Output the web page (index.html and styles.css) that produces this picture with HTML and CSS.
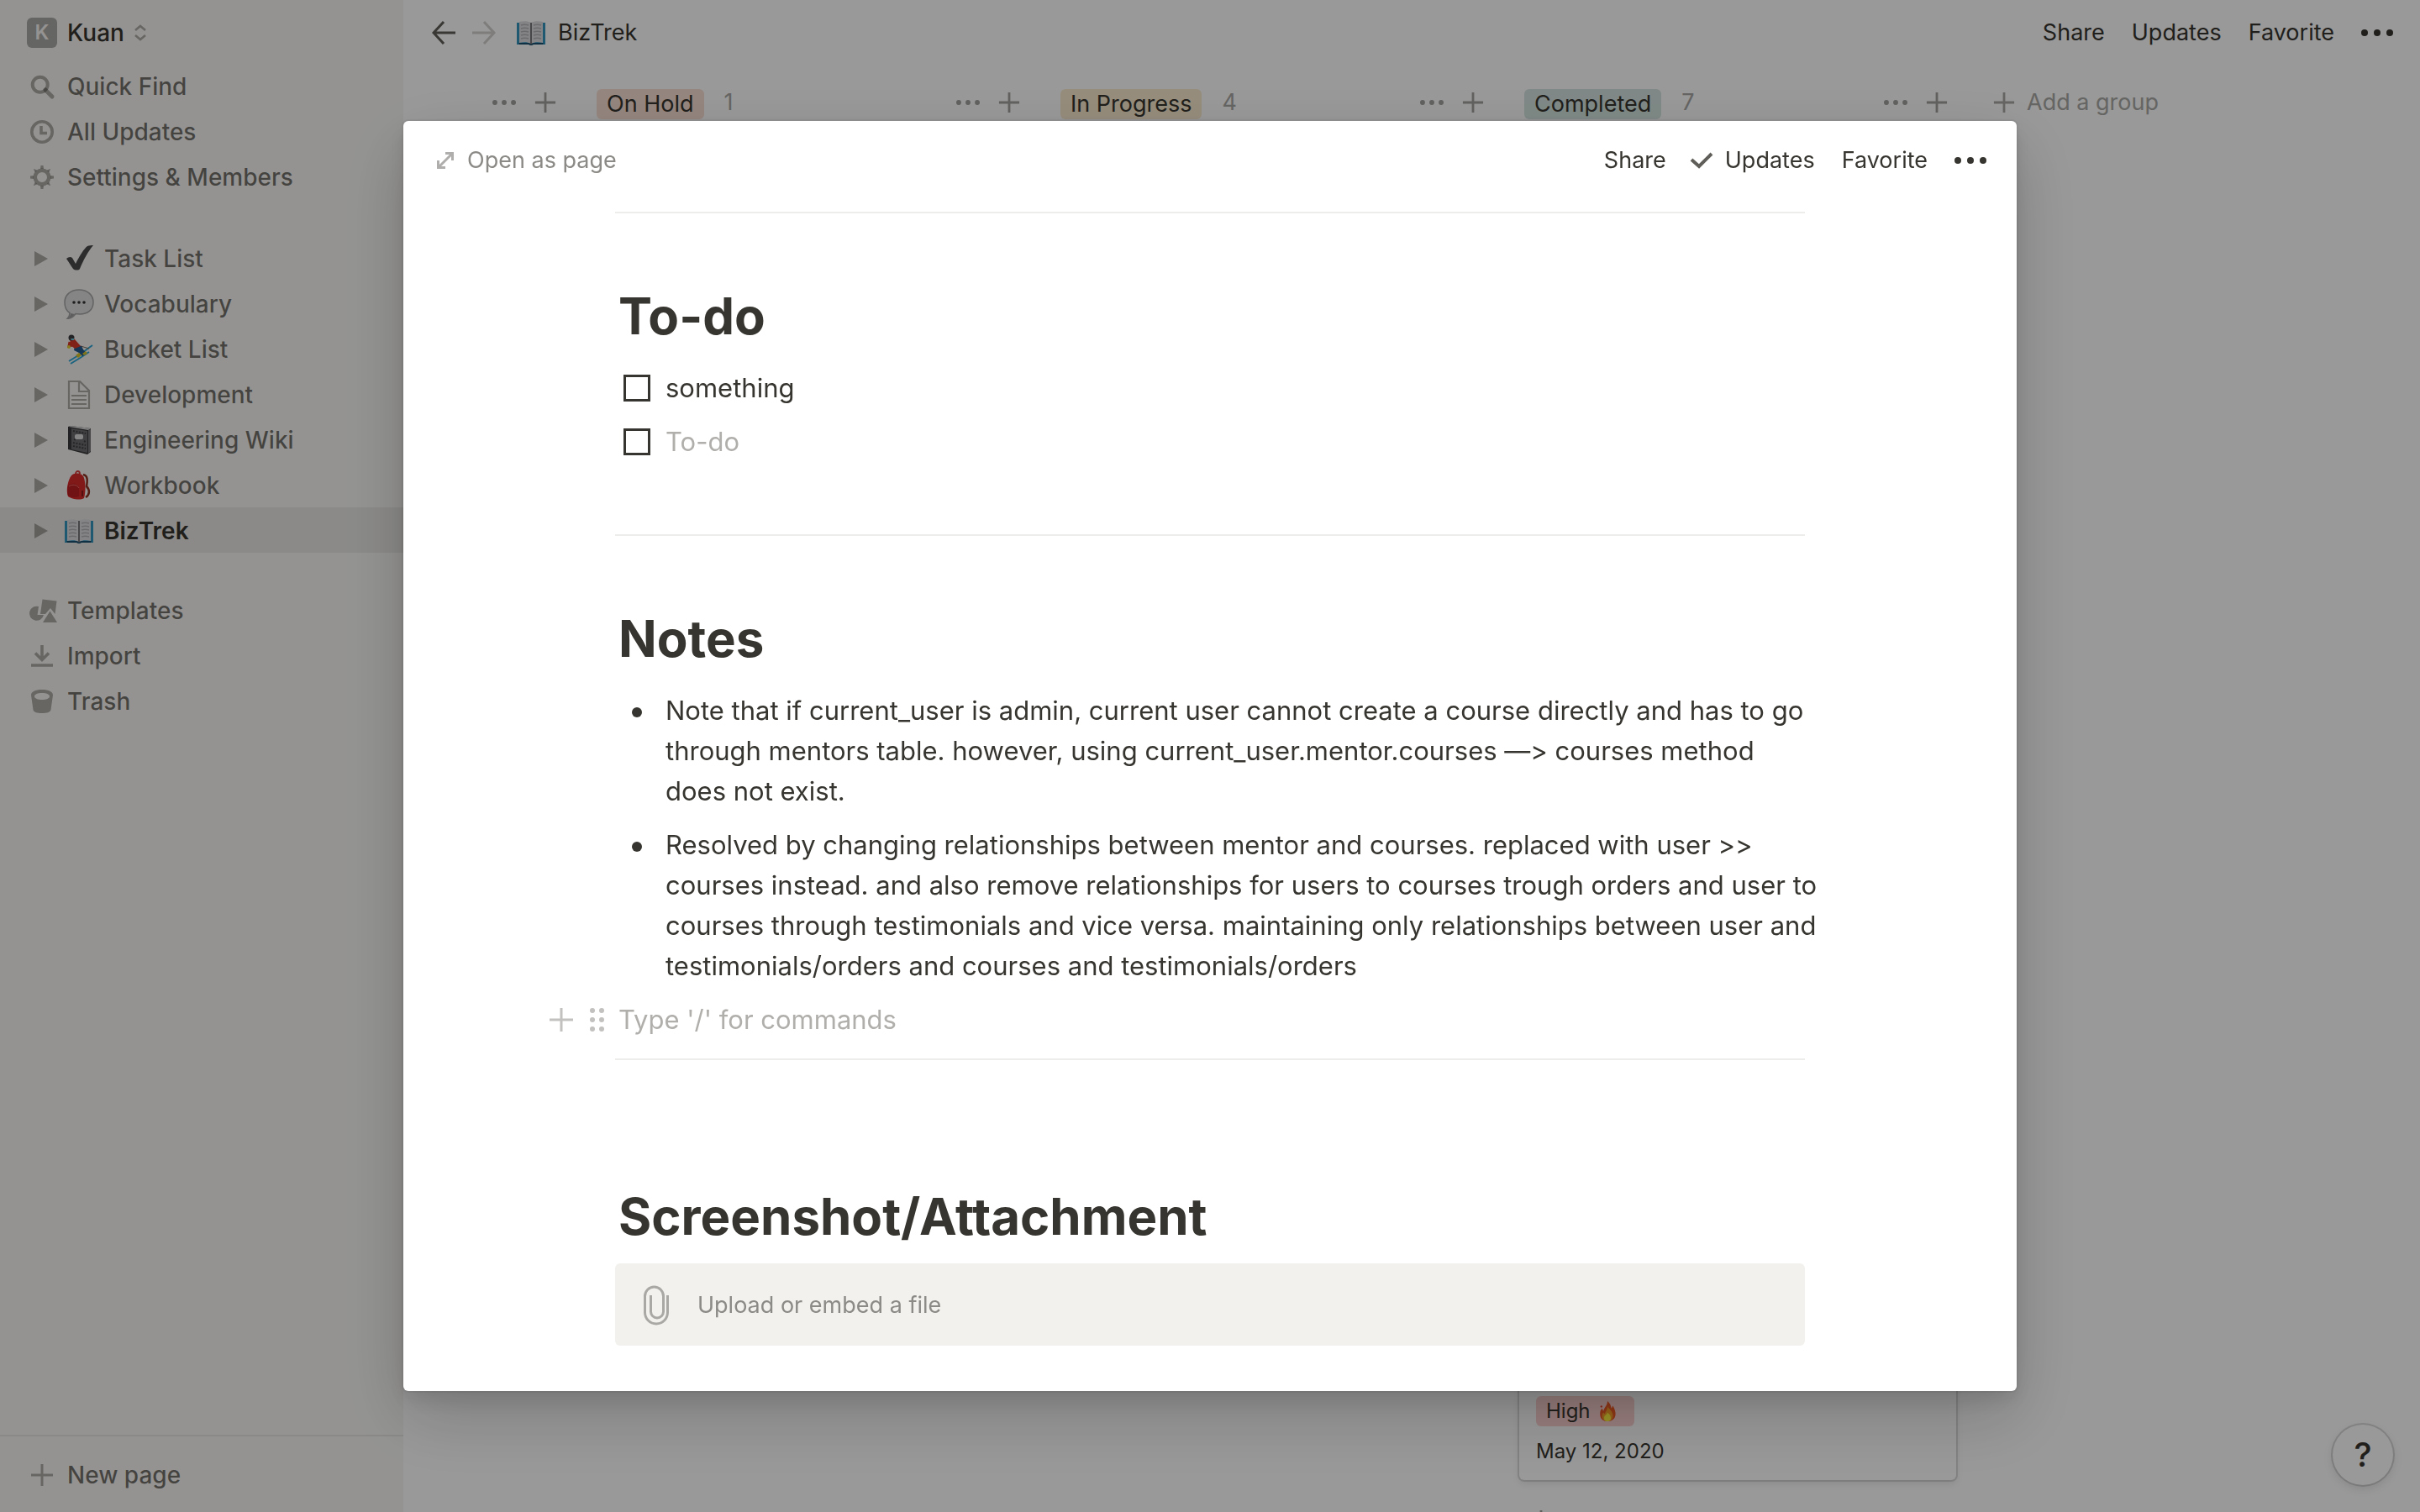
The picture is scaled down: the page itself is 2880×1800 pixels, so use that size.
FILE: index.html
```html
<!DOCTYPE html>
<html lang="en">
<head>
<meta charset="utf-8">
<meta name="viewport" content="width=device-width, initial-scale=1">
<title>BizTrek</title>
<link rel="stylesheet" href="styles.css">
</head>
<body>
<svg class="sprite" aria-hidden="true">
  <symbol id="plus" viewBox="0 0 28 28"><path d="M14 1v26M1 14h26" fill="none" stroke="currentColor" stroke-width="3"/></symbol>
  <symbol id="dots" viewBox="0 0 38 8"><circle cx="4" cy="4" r="4"/><circle cx="19" cy="4" r="4"/><circle cx="34" cy="4" r="4"/></symbol>
  <symbol id="triangle" viewBox="0 0 18 18"><path d="M1 0v18l16-9z"/></symbol>
  <symbol id="book" viewBox="0 0 36 36">
    <path d="M1 6h34v26H1z" fill="#3593bd"/>
    <path d="M3 30h30l-1 2H21l-2 1h-2l-2-1H4z" fill="#1c5270"/>
    <path d="M4 5c5-1 10-1 14 1 4-2 9-2 14-1v25c-5-1-10-1-14 1-4-2-9-2-14-1z" fill="#dcdbde"/>
    <path d="M17 6h2v25l-1 1-1-1z" fill="#77757a"/>
    <path d="M6 9c3-1 6-1 9 0M6 13c3-1 6-1 9 0M6 17c3-1 6-1 9 0M6 21c3-1 6-1 9 0M6 25c3-1 6-1 9 0M21 9c3-1 6-1 9 0M21 13c3-1 6-1 9 0M21 17c3-1 6-1 9 0M21 21c3-1 6-1 9 0M21 25c3-1 6-1 9 0" fill="none" stroke="#b3b1b6" stroke-width="1.4"/>
  </symbol>
</svg>

<div class="app">
  <nav class="sidebar" aria-label="Workspace">
    <button class="row switcher" type="button">
      <span class="avatar">K</span>Kuan
      <svg class="chevrons" viewBox="0 0 14 20"><path d="M1 7l6-5 6 5M1 13l6 5 6-5" fill="none" stroke="currentColor" stroke-width="2.6"/></svg>
    </button>
    <div class="group">
      <button class="row" type="button">
        <svg class="icon" viewBox="0 0 36 36"><circle cx="15.700" cy="15.700" r="9" fill="none" stroke="currentColor" stroke-width="4"/><path d="M22 22l8 8" stroke="currentColor" stroke-width="5" stroke-linecap="round"/></svg>
        Quick Find
      </button>
      <button class="row" type="button">
        <svg class="icon" viewBox="0 0 36 36"><circle cx="18" cy="18" r="12.200" fill="none" stroke="currentColor" stroke-width="3.600"/><path d="M17 11v8.500h7" fill="none" stroke="currentColor" stroke-width="3.600"/></svg>
        All Updates
      </button>
      <button class="row" type="button">
        <svg class="icon" viewBox="0 0 36 36" fill="currentColor"><path fill-rule="evenodd" d="M18 7.500a10.500 10.500 0 1 1 0 21a10.500 10.500 0 1 1 0-21zm0 4.500a6 6 0 1 0 0 12a6 6 0 1 0 0-12z"/><path d="M16 8l.5-4h3l.5 4zM16 28l.5 4h3l.5-4zM8 16l-4 .5v3l4 .5zM28 16l4 .5v3l-4 .5zM9.700 12.300L8 8.500 8.500 8l3.800 1.700zM26.300 12.300L28 8.500 27.500 8l-3.800 1.700zM9.700 23.700L8 27.500l.5.500 3.800-1.700zM26.300 23.700l1.700 3.800-.5.500-3.800-1.700z"/></svg>
        Settings &amp; Members
      </button>
    </div>
    <div class="group tree">
      <a class="row" href="#task-list"><svg class="toggle"><use href="#triangle"/></svg>
        <svg class="icon" viewBox="0 0 36 36"><path d="M3 18c2-2 5-3 7-1l4 7C19 14 24 6 28 3c2-1 5-1 7-1C29 9 23 20 19 30c-1 2-6 2-8 0C8 26 6 22 3 18z" fill="#4a4a4b"/></svg>
        Task List</a>
      <a class="row" href="#vocabulary"><svg class="toggle"><use href="#triangle"/></svg>
        <svg class="icon" viewBox="0 0 36 36"><path d="M18 1c10 0 17 6 17 15s-7 14-16 14l-5-.5C11 34 8 35 4 35.500c2-2 3-4 3-7C3 26 1 21 1 16 1 7 8 1 18 1z" fill="#dededf" stroke="#a5a5a6" stroke-width="1.500"/><path d="M5 35c2-2 3-4 3-6l5 1c-2 2-4 4-8 5z" fill="#9b9b9d"/><circle cx="12" cy="16" r="1.800" fill="#333"/><circle cx="18" cy="16" r="1.800" fill="#333"/><circle cx="24" cy="16" r="1.800" fill="#333"/></svg>
        Vocabulary</a>
      <a class="row" href="#bucket-list"><svg class="toggle"><use href="#triangle"/></svg>
        <svg class="icon" viewBox="0 0 36 36"><path d="M6 32l13-8 15-11M8 35l13-8 9-6" fill="none" stroke="#2fa6d4" stroke-width="2"/><path d="M20 14l10 3" stroke="#7d6a56" stroke-width="1"/><path d="M13 13l8 1 2 4 4 5-5 3-4-4-6-3z" fill="#265a8e"/><path d="M14 25l4-3 3 3-4 3zM22 23l4-3 2 3-4 2z" fill="#d9c22b"/><path d="M7 5l6 1 7 8-7 3-5-4z" fill="#d8392a"/><path d="M7 9l-1 5 4-1" fill="none" stroke="#d8392a" stroke-width="3"/><circle cx="6" cy="15" r="2" fill="#e3cf35"/><circle cx="9" cy="4" r="3.500" fill="#3b3b40"/><path d="M8 5h4v2H9z" fill="#6ec1d8"/></svg>
        Bucket List</a>
      <a class="row" href="#development"><svg class="toggle"><use href="#triangle"/></svg>
        <svg class="icon" viewBox="0 0 36 36"><path d="M6 2h13l11 11v21H6zM18 2v12h12M9 19h18M9 24h18M9 29h18" fill="none" stroke="currentColor" stroke-width="2.200"/></svg>
        Development</a>
      <a class="row" href="#engineering-wiki"><svg class="toggle"><use href="#triangle"/></svg>
        <svg class="icon" viewBox="0 0 36 36"><path d="M5 2l3-1 24 3v28l-4 3L5 29z" fill="#3a3a3c"/><path d="M8 1l24 3-3 2L6 2z" fill="#d4d4d6"/><path d="M29 6l3-1v26l-3 3z" fill="#77777a"/><path d="M9 4l19 3v26L9 29z" fill="#6b6b6e"/><path d="M11 7l15 3M11 21l15 3M11 25l15 3M12 17l3 1M24 19l2 1" stroke="#3f3f42" stroke-width="2" stroke-dasharray="2 1.500"/><rect x="13" y="11" width="10" height="6" rx="2" fill="#dcdcdd"/></svg>
        Engineering Wiki</a>
      <a class="row" href="#workbook"><svg class="toggle"><use href="#triangle"/></svg>
        <svg class="icon" viewBox="0 0 36 36"><path d="M23 5c6 1 5 8 4 14 4 4 4 10-1 13" fill="none" stroke="#8d3323" stroke-width="2.500"/><path d="M14 4c0-4 5-4 5 0" fill="none" stroke="#d83a3a" stroke-width="1.800"/><path d="M9 6c5-4 13-3 15 3 2 7 2 17 0 24-5 3-15 1-19-2C2 24 5 11 9 6z" fill="#d92a2a"/><path d="M5 18c5-4 12-2 13 3v10c-5 2-10 1-13-1-1-4-1-8 0-12z" fill="#bd1e22"/><path d="M6 19c4-3 10-2 12 2" fill="none" stroke="#ef6a66" stroke-width="1"/><path d="M22 24v7" stroke="#6c1518" stroke-width="1.500"/></svg>
        Workbook</a>
      <a class="row current" href="#biztrek" aria-current="page"><svg class="toggle"><use href="#triangle"/></svg>
        <svg class="icon"><use href="#book"/></svg>
        BizTrek</a>
    </div>
    <div class="group">
      <button class="row" type="button">
        <svg class="icon" viewBox="0 0 36 36" fill="currentColor"><path d="M14 13l-1.500 10H20a8.600 8.600 0 1 1-6-10z"/><path d="M18.500 4.500l17 2-2 15.500-5.500-7-6 7h-6z"/><path d="M27.500 18.500l8.500 13.500H19z"/></svg>
        Templates
      </button>
      <button class="row" type="button">
        <svg class="icon" viewBox="0 0 36 36"><path d="M18 5v16M10 14.500l8 8 8-8M5 29h26" fill="none" stroke="currentColor" stroke-width="3.600"/></svg>
        Import
      </button>
      <button class="row" type="button">
        <svg class="icon" viewBox="0 0 36 36"><path fill="currentColor" fill-rule="evenodd" d="M18 4c8 0 13 2.500 13 6.500L28.500 28c-.5 3-5 4-10.500 4S8 31 7.500 28L5 10.500C5 6.500 10 4 18 4zm0 4c-5 0-9 1.500-9 4s4 4 9 4 9-1.500 9-4-4-4-9-4z"/></svg>
        Trash
      </button>
    </div>
    <button class="row new-page" type="button">
      <svg class="icon" viewBox="-4 -4 36 36"><use href="#plus" width="28" height="28"/></svg>New page
    </button>
  </nav>

  <main class="main">
    <header class="topbar">
      <button class="nav-arrow" type="button" aria-label="Back"><svg viewBox="0 0 28 28"><path d="M14 1L2 14l12 13M2 14h26" fill="none" stroke="currentColor" stroke-width="3"/></svg></button>
      <button class="nav-arrow faded" type="button" aria-label="Forward"><svg viewBox="0 0 28 28"><path d="M14 1l12 13-12 13M26 14H0" fill="none" stroke="currentColor" stroke-width="3"/></svg></button>
      <a class="crumb" href="#biztrek"><svg class="icon"><use href="#book"/></svg>BizTrek</a>
      <div class="actions">
        <button type="button">Share</button>
        <button type="button">Updates</button>
        <button type="button">Favorite</button>
        <button type="button" aria-label="More"><svg class="more"><use href="#dots"/></svg></button>
      </div>
    </header>
    <div class="board">
      <section class="column cut">
        <div class="column-head">
          <div class="tools"><button type="button" aria-label="Group options"><svg class="more"><use href="#dots"/></svg></button><button type="button" aria-label="Add card"><svg class="add"><use href="#plus"/></svg></button></div>
        </div>
      </section>
      <section class="column">
        <div class="column-head">
          <span class="tag hold">On Hold</span><span class="count">1</span>
          <div class="tools"><button type="button" aria-label="Group options"><svg class="more"><use href="#dots"/></svg></button><button type="button" aria-label="Add card"><svg class="add"><use href="#plus"/></svg></button></div>
        </div>
      </section>
      <section class="column">
        <div class="column-head">
          <span class="tag progress">In Progress</span><span class="count">4</span>
          <div class="tools"><button type="button" aria-label="Group options"><svg class="more"><use href="#dots"/></svg></button><button type="button" aria-label="Add card"><svg class="add"><use href="#plus"/></svg></button></div>
        </div>
      </section>
      <section class="column">
        <div class="column-head">
          <span class="tag done">Completed</span><span class="count">7</span>
          <div class="tools"><button type="button" aria-label="Group options"><svg class="more"><use href="#dots"/></svg></button><button type="button" aria-label="Add card"><svg class="add"><use href="#plus"/></svg></button></div>
        </div>
        <article class="card">
          <span class="priority">High
            <svg viewBox="0 0 24 30"><path d="M12 0c5 4 5 8 6 11l2-4c3 5 4 9 4 12 0 7-5 11-12 11S1 26 1 19c0-4 1-6 3-8l2 4c1-6 6-8 6-15z" fill="#ee5a24"/><path d="M12 8c3 4 8 7 8 14 0 5-3 8-8 8s-8-3-8-8c0-2 1-4 2-5l2 2c1-4 4-6 4-11z" fill="#f7a02c"/><path d="M12 17c2 2 5 4 5 8s-2 5-5 5-5-1-5-5 4-4 5-8z" fill="#ffef3e"/><circle cx="3" cy="8" r="1.500" fill="#e8452c"/></svg>
          </span>
          <time datetime="2020-05-12">May 12, 2020</time>
        </article>
        <button class="new-card" type="button" aria-label="New"><svg class="add"><use href="#plus"/></svg></button>
      </section>
      <button class="add-group" type="button"><svg class="add"><use href="#plus"/></svg>Add a group</button>
    </div>
    <button class="help" type="button" aria-label="Help">?</button>
  </main>
</div>

<div class="overlay">
  <div class="modal" role="dialog" aria-modal="true" aria-label="Card">
    <header class="modal-head">
      <button class="open" type="button"><svg viewBox="0 0 20 20"><path d="M10 1.500h8.500V10M1.500 10v8.500H10M18 2L2 18" fill="none" stroke="currentColor" stroke-width="3"/></svg>Open as page</button>
      <div class="actions">
        <button type="button">Share</button>
        <button class="following" type="button"><svg viewBox="0 0 28 20"><path d="M2 9l9 8L26 2" fill="none" stroke="currentColor" stroke-width="4"/></svg>Updates</button>
        <button type="button">Favorite</button>
        <button type="button" aria-label="More"><svg class="more"><use href="#dots"/></svg></button>
      </div>
    </header>
    <div class="doc">
      <hr>
      <h1>To-do</h1>
      <div class="todo"><input type="checkbox" id="todo-1"><label for="todo-1">something</label></div>
      <div class="todo"><input type="checkbox" aria-label="Done"><input class="text" type="text" placeholder="To-do" aria-label="To-do"></div>
      <hr class="after-todo">
      <h1>Notes</h1>
      <ul>
        <li>Note that if current_user is admin, current user cannot create a course directly and has to go<br>through mentors table. however, using current_user.mentor.courses —&gt; courses method<br>does not exist.</li>
        <li>Resolved by changing relationships between mentor and courses. replaced with user &gt;&gt;<br>courses instead. and also remove relationships for users to courses trough orders and user to<br>courses through testimonials and vice versa. maintaining only relationships between user and<br>testimonials/orders and courses and testimonials/orders</li>
      </ul>
      <div class="line">
        <button type="button" aria-label="Add block"><svg class="plus" viewBox="0 0 28 28"><path d="M14 0v28M0 14h28" stroke="currentColor" stroke-width="3"/></svg></button>
        <button type="button" aria-label="Drag block"><svg class="grip" viewBox="0 0 18 28" fill="currentColor"><circle cx="3" cy="3" r="3"/><circle cx="14" cy="3" r="3"/><circle cx="3" cy="14" r="3"/><circle cx="14" cy="14" r="3"/><circle cx="3" cy="25" r="3"/><circle cx="14" cy="25" r="3"/></svg></button>
        <input class="text" type="text" placeholder="Type '/' for commands" aria-label="New block">
      </div>
      <hr class="after-line">
      <h1 class="late">Screenshot/Attachment</h1>
      <button class="upload" type="button">
        <svg viewBox="0 0 30 48"><path d="M28.500 12v20.500a13.500 13.500 0 0 1-27 0V13a11 11 0 0 1 22 0v18.500a7.500 7.500 0 0 1-15 0V12" fill="none" stroke="currentColor" stroke-width="3"/></svg>
        Upload or embed a file
      </button>
    </div>
  </div>
</div>
</body>
</html>
```

FILE: styles.css
```css
* { box-sizing: border-box; }

:root {
  --ink: #37352f;
  --muted: rgba(25, 23, 17, 0.6);
  --icon: rgba(25, 23, 17, 0.34);
  --rule: #ededec;
}

body {
  margin: 0;
  height: 100vh;
  overflow: hidden;
  color: var(--ink);
  background: #fff;
  font: 27px/36px Inter, "Liberation Sans", sans-serif;
  font-feature-settings: "calt" 0;
}

button, input {
  margin: 0;
  padding: 0;
  border: 0;
  background: none;
  color: inherit;
  font: inherit;
  font-feature-settings: inherit;
}

a { color: inherit; text-decoration: none; }
svg { display: block; flex: none; }
.sprite { display: none; }

.app { display: flex; height: 100vh; }

/* Sidebar */
.sidebar {
  flex: none;
  width: 480px;
  display: flex;
  flex-direction: column;
  background: #f7f6f3;
  font-size: 28px;
  font-weight: 500;
}

.row {
  display: flex;
  align-items: center;
  gap: 12px;
  width: 100%;
  height: 54px;
  padding: 2px 32px 0;
  color: var(--muted);
  text-align: left;
}

.row .icon { width: 36px; height: 36px; color: var(--icon); }
.switcher { height: 75px; color: var(--ink); }

.avatar {
  width: 36px;
  height: 36px;
  border-radius: 6px;
  background: #a9a8a5;
  color: #f7f6f3;
  font-size: 24px;
  font-weight: 600;
  text-align: center;
}

.chevrons { width: 14px; height: 20px; color: var(--icon); }
.group { margin-bottom: 43px; }
.tree { margin-bottom: 41px; }
.tree .row { padding-left: 40px; }
.toggle { width: 18px; height: 18px; margin-right: 6px; fill: var(--icon); }
.tree .current { background: #e8e7e4; color: var(--ink); font-weight: 600; }

.new-page {
  height: 92px;
  margin-top: auto;
  border-top: 2px solid #e6e5e2;
}

/* Page behind the dialog */
.main {
  flex: 1;
  min-width: 0;
  display: flex;
  flex-direction: column;
}

.topbar {
  flex: none;
  display: flex;
  align-items: center;
  height: 76px;
  padding: 2px 32px 0 34px;
}

.nav-arrow { margin-right: 20px; color: #605e58; }
.nav-arrow svg { width: 28px; height: 28px; }
.nav-arrow.faded { color: #d2d1cf; }
.crumb { display: flex; align-items: center; gap: 14px; margin-left: 4px; }
.crumb .icon { width: 36px; height: 36px; }

.actions { display: flex; align-items: center; gap: 32px; margin-left: auto; }
.more { width: 38px; height: 8px; fill: currentColor; }

.board {
  flex: 1;
  min-height: 0;
  display: flex;
  align-items: stretch;
  gap: 32px;
  overflow: hidden;
}

.column {
  flex: none;
  width: 520px;
  display: flex;
  flex-direction: column;
}

.column.cut { width: 192px; }

.column-head {
  display: flex;
  align-items: center;
  height: 92px;
  padding: 0 10px 0 6px;
}

.tag { height: 36px; margin-top: 4px; padding: 0 12px; border-radius: 6px; }
.hold { background: #fadfd5; }
.progress { background: #faebd0; }
.done { background: #d5e5e1; }
.count { margin-left: 24px; color: #a9a8a5; }
.tools { display: flex; align-items: center; gap: 22px; margin-left: auto; color: #a3a29f; }
.tools .more { width: 28px; height: 6px; }
.add { width: 26px; height: 26px; }

.add-group {
  display: flex;
  align-items: center;
  align-self: flex-start;
  gap: 14px;
  height: 92px;
  margin-left: 12px;
  color: #a9a8a5;
}

.card {
  display: flex;
  flex-direction: column;
  align-items: flex-start;
  gap: 12px;
  margin-top: auto;
  padding: 60px 20px 16px;
  border-radius: 6px;
  box-shadow: 0 0 0 2px rgba(15, 15, 15, 0.12), 0 4px 8px rgba(15, 15, 15, 0.1);
  font-size: 24px;
}

.priority {
  display: flex;
  align-items: center;
  gap: 10px;
  height: 36px;
  padding: 0 22px 0 12px;
  border-radius: 6px;
  background: #fbd0d0;
}

.priority svg { width: 20px; height: 24px; }
.new-card { align-self: flex-start; height: 38px; padding: 35px 0 0 13px; overflow: hidden; color: #a3a29f; }

.help {
  position: absolute;
  right: 32px;
  bottom: 32px;
  width: 72px;
  height: 72px;
  border-radius: 50%;
  background: #fff;
  box-shadow: 0 0 0 2px rgba(15, 15, 15, 0.14), 0 4px 12px rgba(15, 15, 15, 0.12);
  font-size: 40px;
  font-weight: 500;
}

/* Dialog */
.overlay {
  position: fixed;
  inset: 0;
  display: flex;
  justify-content: center;
  padding: 144px;
  background: rgba(0, 0, 0, 0.4);
}

.modal {
  width: 1920px;
  overflow: hidden;
  border-radius: 6px;
  background: #fff;
  box-shadow: 0 0 0 2px rgba(15, 15, 15, 0.05), 0 10px 20px rgba(15, 15, 15, 0.1), 0 30px 80px rgba(15, 15, 15, 0.2);
}

.modal-head {
  display: flex;
  align-items: center;
  height: 92px;
  padding: 2px 36px 0 40px;
}

.open { display: flex; align-items: center; gap: 16px; color: #8b8a86; }
.open svg { width: 20px; height: 20px; color: #afaeac; }
.following { display: flex; align-items: center; gap: 14px; margin-left: -4px; }
.following svg { width: 28px; height: 20px; color: #5f5e59; }

.doc { padding: 16px 252px 0; font-size: 31px; line-height: 48px; }

hr { height: 2px; margin: 0; border: 0; background: var(--rule); }

h1 {
  margin: 83px 0 23px;
  padding: 0 4px;
  font-size: 60px;
  font-weight: 650;
  line-height: 78px;
}

.todo { display: flex; align-items: center; gap: 18px; margin-bottom: 16px; padding-left: 10px; }

.todo input[type="checkbox"] {
  appearance: none;
  width: 32px;
  height: 32px;
  border: 3px solid var(--ink);
}

.text { flex: 1; min-width: 0; height: 48px; outline: 0; }
.text::placeholder { color: #b0afac; opacity: 1; }
.after-todo { margin-top: 86px; }

ul { margin: 0 -28px 0 0; padding: 0 0 0 60px; list-style: none; }
li { margin-bottom: 16px; }
li::before {
  content: "";
  float: left;
  width: 12px;
  height: 12px;
  margin: 20px 0 0 -40px;
  border-radius: 50%;
  background: var(--ink);
}

.line { display: flex; align-items: center; margin-left: -78px; color: #c2c1bf; }
.plus { width: 28px; height: 28px; margin-right: 20px; }
.grip { width: 18px; height: 28px; margin-right: 16px; }
.after-line { margin-top: 22px; }
h1.late { margin: 147px 0 17px; }

.upload {
  display: flex;
  align-items: center;
  gap: 34px;
  width: 100%;
  height: 98px;
  padding: 2px 34px 0;
  border-radius: 6px;
  background: #f2f1ee;
  color: #8b8a86;
  font-size: 27px;
}

.upload svg { width: 30px; height: 48px; color: #a9a8a5; }
```
